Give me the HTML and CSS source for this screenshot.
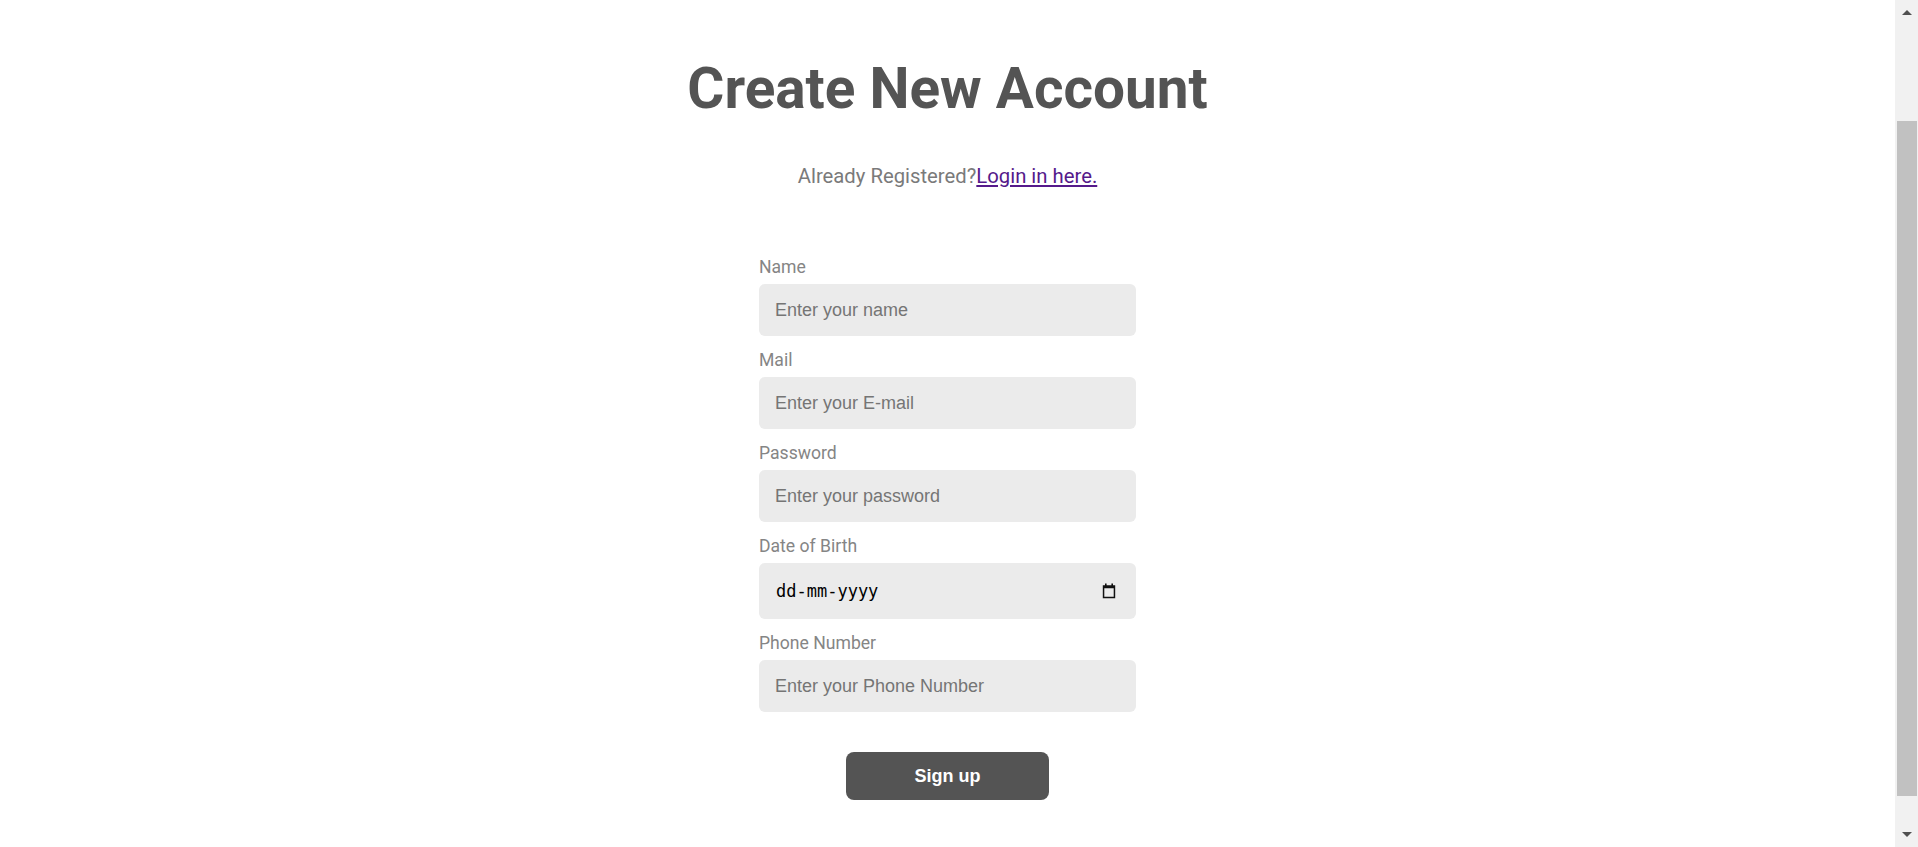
FILE: index.html
```html
<!DOCTYPE html>
<html lang="en">
<head>
<meta charset="utf-8">
<title>Create New Account</title>
<link rel="stylesheet" href="styles.css">
</head>
<body>
<main class="page">
  <h1 class="title">Create New Account</h1>
  <p class="sub">Already Registered?<a class="login" href="#login">Login in here.</a></p>
  <form class="form">
    <label class="label" for="name">Name</label>
    <input class="field" id="name" type="text" placeholder="Enter your name">
    <label class="label" for="mail">Mail</label>
    <input class="field" id="mail" type="email" placeholder="Enter your E-mail">
    <label class="label" for="pass">Password</label>
    <input class="field" id="pass" type="password" placeholder="Enter your password">
    <label class="label" for="dob">Date of Birth</label>
    <div class="date-box">
      <input class="date-input" id="dob" type="text" placeholder="dd-mm-yyyy">
      <svg class="cal-icon" width="14" height="16" viewBox="0 0 14 16" aria-hidden="true">
        <rect x="3" y="0.5" width="1.6" height="2.5" fill="#111"/>
        <rect x="9.4" y="0.5" width="1.6" height="2.5" fill="#111"/>
        <path d="M0.8 2.2h12.4v13H0.8z M2.3 5.2v8.5h9.4V5.2z" fill="#111" fill-rule="evenodd"/>
      </svg>
    </div>
    <label class="label" for="phone">Phone Number</label>
    <input class="field" id="phone" type="tel" placeholder="Enter your Phone Number">
    <button class="btn" type="button">Sign up</button>
  </form>
</main>
<aside class="scrollbar" aria-hidden="true">
  <div class="sb-btn"><span class="arrow-up"></span></div>
  <div class="sb-track"><div class="sb-thumb"></div></div>
  <div class="sb-btn"><span class="arrow-down"></span></div>
</aside>
</body>
</html>
```
FILE: styles.css
```css
html, body {
  margin: 0;
  padding: 0;
  background: #ffffff;
  overflow: hidden;
}
body {
  font-family: Roboto, "Liberation Sans", Arial, sans-serif;
}
.page {
  display: flex;
  flex-direction: column;
  align-items: center;
  padding: 56px 23px 0 0;
}
.title {
  margin: 0;
  font-size: 56.7px;
  line-height: 66px;
  font-weight: 700;
  color: #545454;
}
.sub {
  margin: 43px 0 0;
  font-size: 20.3px;
  line-height: 22px;
  color: #7a7a7a;
}
.login {
  color: #551a8b;
}
.form {
  margin-top: 71px;
  width: 377px;
  display: flex;
  flex-direction: column;
}
.label {
  font-size: 17.6px;
  line-height: 19px;
  color: #858585;
  margin-bottom: 7px;
}
.field {
  box-sizing: border-box;
  height: 52px;
  margin: 0 0 15px;
  padding: 0 16px;
  border: none;
  border-radius: 6px;
  background: #ebebeb;
  font-family: "Liberation Sans", Arial, sans-serif;
  font-size: 18px;
  color: #222;
  outline: none;
}
.field::placeholder {
  color: #757575;
}
.date-box {
  box-sizing: border-box;
  height: 56px;
  margin: 0 0 15px;
  padding: 0 20px 0 17px;
  border-radius: 6px;
  background: #ebebeb;
  display: flex;
  align-items: center;
  gap: 8px;
}
.date-input {
  flex: 1;
  min-width: 0;
  padding: 0;
  border: none;
  background: transparent;
  font-family: "DejaVu Sans Mono", "Liberation Mono", monospace;
  font-size: 17px;
  color: #000;
  outline: none;
}
.date-input::placeholder {
  color: #000;
}
.cal-icon {
  flex: none;
  display: block;
}
.btn {
  align-self: center;
  margin-top: 25px;
  width: 203px;
  height: 48px;
  border: none;
  border-radius: 8px;
  background: #545454;
  color: #ffffff;
  font-family: "Liberation Sans", Arial, sans-serif;
  font-size: 18px;
  font-weight: 700;
}
.scrollbar {
  position: fixed;
  top: 0;
  right: 0;
  bottom: 0;
  width: 23px;
  background: #f1f1f1;
  display: flex;
  flex-direction: column;
}
.sb-btn {
  height: 23px;
  flex: none;
  display: flex;
  align-items: center;
  justify-content: center;
}
.arrow-up {
  width: 0;
  height: 0;
  border-left: 5px solid transparent;
  border-right: 5px solid transparent;
  border-bottom: 5px solid #505050;
  margin-top: 2px;
}
.arrow-down {
  width: 0;
  height: 0;
  border-left: 5px solid transparent;
  border-right: 5px solid transparent;
  border-top: 5px solid #505050;
  margin-bottom: 2px;
}
.sb-track {
  flex: 1;
  display: flex;
  flex-direction: column;
}
.sb-thumb {
  margin: 98px 1px 0 2px;
  height: 675px;
  background: #c1c1c1;
}
```
